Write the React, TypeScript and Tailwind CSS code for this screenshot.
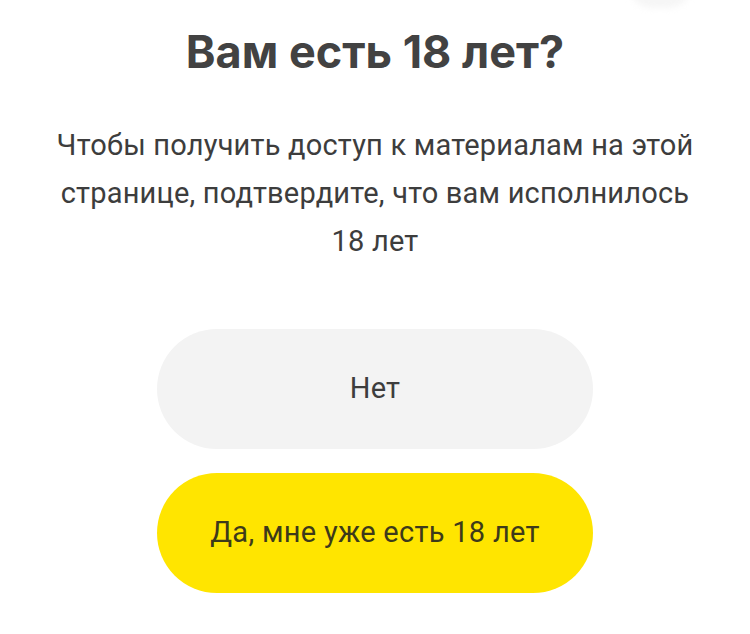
import React from "react";

export default function App() {
  return (
    <div className="relative w-[750px] h-[634px] bg-white overflow-hidden" style={{ fontFamily: "Roboto, 'Noto Sans', sans-serif" }}>
      <div className="absolute left-[628px] top-[-40px] w-[64px] h-[48px] rounded-full bg-[#f6f6f6] blur-[3px]" />
      <div className="flex flex-col items-center pt-[22px]">
        <h1 className="text-[45px] leading-[60px] font-bold text-[#424242] tracking-[0px]" style={{ fontFamily: "Inter, 'Noto Sans', sans-serif" }}>
          Вам есть 18 лет?
        </h1>
        <p className="mt-[39px] w-[710px] text-center text-[29px] leading-[48px] tracking-[0.2px] text-[#3d3d3d]">
          Чтобы получить доступ к материалам на этой
          <br />
          странице, подтвердите, что вам исполнилось
          <br />
          18 лет
        </p>
        <div className="mt-[64px] flex flex-col gap-[24px] w-[436px]">
          <button className="h-[120px] w-full rounded-full bg-[#f3f3f3] text-[29px] tracking-[0.2px] text-[#3d3d3d]">
            Нет
          </button>
          <button className="h-[120px] w-full rounded-full bg-[#ffe500] text-[29px] tracking-[0.3px] text-[#3d3a1a]">
            Да, мне уже есть 18 лет
          </button>
        </div>
      </div>
    </div>
  );
}
